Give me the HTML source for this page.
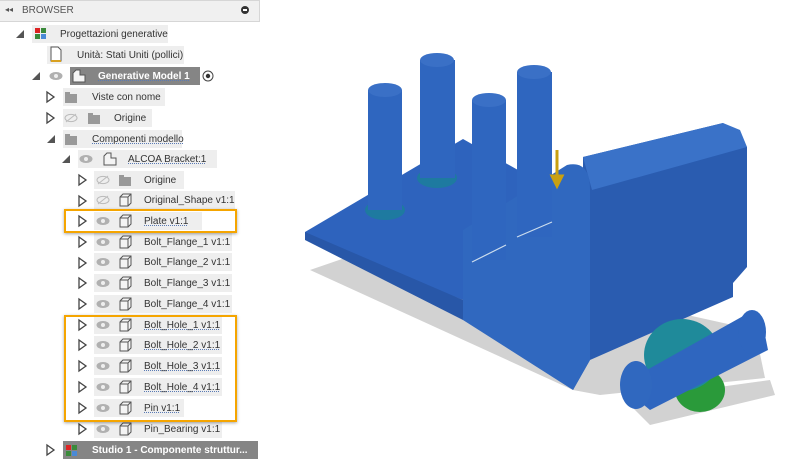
<!DOCTYPE html>
<html><head><meta charset="utf-8"><style>
body{margin:0;width:809px;height:465px;background:#fff;position:relative;overflow:hidden;font-family:"Liberation Sans",sans-serif;font-size:10px;color:#333}
.a{position:absolute}
.hdr{left:0;top:0;width:259px;height:20px;background:#f0f0f0;border:1px solid #d6d6d6;border-left:none}
.box{position:absolute;height:18px;background:#eeeeee}
.dark{background:#858585;color:#fff;font-weight:bold}
.t{position:absolute;line-height:18px;white-space:nowrap;margin-top:1px}
.u{text-decoration:underline dotted #5a7bb5}
.ob{position:absolute;border:2px solid #f5a500;box-shadow:0 1px 3px rgba(0,0,0,.35)}
</style></head><body>
<div class="a hdr"></div>
<div class="a" style="left:5px;top:5px;font-size:8px;color:#555">◂◂</div>
<div class="a" style="left:22px;top:5px;font-size:10px;color:#555">BROWSER</div>
<div class="a" style="left:241px;top:6px;width:8px;height:8px;border-radius:50%;background:#333"></div>
<div class="a" style="left:243px;top:9px;width:4px;height:2px;background:#fff"></div>

<svg class="a" style="left:0;top:0" width="270" height="465">
<defs>
<g id="tri"><path d="M1 1 L8 6 L1 11 Z" fill="#fff" stroke="#444" stroke-width="1.3"/></g>
<g id="open"><path d="M1 10 L9 10 L9 2 Z" fill="#555"/></g>
<g id="eye"><ellipse cx="6" cy="5" rx="6.5" ry="4" fill="#b0b0b0"/><circle cx="6" cy="5" r="2" fill="#eee"/></g>
<g id="eyex"><ellipse cx="6" cy="5" rx="6" ry="3.6" fill="none" stroke="#bbb"/><line x1="1" y1="9" x2="11" y2="1" stroke="#bbb"/></g>
<g id="fold"><rect x="0" y="2" width="12" height="9" fill="#999"/><rect x="0" y="0" width="5" height="3" fill="#999"/></g>
<g id="cube"><path d="M1 4 L4 1 L12 1 L12 10 L9 13 L1 13 Z" fill="#f4f4f4" stroke="#555"/><path d="M1 4 L9 4 L12 1 M9 4 L9 13" fill="none" stroke="#555"/></g>
<g id="comp"><path d="M1 4 L4 1 L8 1 L8 6 L13 6 L13 13 L1 13 Z" fill="#f4f4f4" stroke="#555"/></g>
<g id="gen"><rect x="0" y="0" width="5" height="5" fill="#d22"/><rect x="6" y="0" width="5" height="5" fill="#3a8a3a"/><rect x="0" y="6" width="5" height="5" fill="#3a8a3a"/><rect x="6" y="6" width="5" height="5" fill="#4a8ad6"/></g>
</defs>
<use href="#open" x="15" y="28"/>
<use href="#open" x="31" y="70"/>
<use href="#tri" x="46" y="91"/>
<use href="#tri" x="46" y="112"/>
<use href="#open" x="46" y="133"/>
<use href="#open" x="61" y="153"/>
<use href="#tri" x="78" y="174"/><use href="#tri" x="78" y="195"/><use href="#tri" x="78" y="215"/><use href="#tri" x="78" y="236"/><use href="#tri" x="78" y="257"/><use href="#tri" x="78" y="277"/><use href="#tri" x="78" y="298"/><use href="#tri" x="78" y="319"/><use href="#tri" x="78" y="339"/><use href="#tri" x="78" y="360"/><use href="#tri" x="78" y="381"/><use href="#tri" x="78" y="402"/><use href="#tri" x="78" y="423"/>
<use href="#tri" x="46" y="444"/>
</svg>

<div class="box" style="left:32px;top:25px;width:136px"></div>
<div class="box" style="left:47px;top:46px;width:137px"></div>
<div class="box dark" style="left:70px;top:67px;width:130px"></div>
<div class="box" style="left:63px;top:88px;width:102px"></div>
<div class="box" style="left:63px;top:109px;width:89px"></div>
<div class="box" style="left:63px;top:130px;width:119px"></div>
<div class="box" style="left:78px;top:150px;width:139px"></div>
<div class="box" style="left:94px;top:171px;width:90px"></div>
<div class="box" style="left:94px;top:191px;width:141px"></div>
<div class="box" style="left:94px;top:212px;width:108px"></div>
<div class="box" style="left:94px;top:233px;width:138px"></div>
<div class="box" style="left:94px;top:253px;width:138px"></div>
<div class="box" style="left:94px;top:274px;width:138px"></div>
<div class="box" style="left:94px;top:295px;width:138px"></div>
<div class="box" style="left:94px;top:316px;width:128px"></div>
<div class="box" style="left:94px;top:336px;width:128px"></div>
<div class="box" style="left:94px;top:357px;width:128px"></div>
<div class="box" style="left:94px;top:378px;width:128px"></div>
<div class="box" style="left:94px;top:399px;width:90px"></div>
<div class="box" style="left:94px;top:420px;width:128px"></div>
<div class="box dark" style="left:63px;top:441px;width:195px"></div>

<svg class="a" style="left:0;top:0" width="270" height="465">
<use href="#gen" x="35" y="28"/>
<path d="M51 47 L58 47 L61 50 L61 61 L51 61 Z" fill="#fff" stroke="#555"/><rect x="51" y="60" width="10" height="2" fill="#d8a020"/>
<use href="#eye" x="50" y="71"/><use href="#comp" x="72" y="69"/>
<circle cx="208" cy="76" r="5" fill="#fff" stroke="#444"/><circle cx="208" cy="76" r="2.2" fill="#333"/>
<use href="#fold" x="65" y="92"/>
<use href="#eyex" x="65" y="113"/><use href="#fold" x="88" y="113"/>
<use href="#fold" x="65" y="134"/>
<use href="#eye" x="80" y="154"/><use href="#comp" x="103" y="152"/>
<use href="#eyex" x="97" y="175"/><use href="#fold" x="119" y="175"/>
<use href="#eyex" x="97" y="195"/><use href="#cube" x="119" y="193"/>
<g id="r"><use href="#eye" x="97" y="216"/><use href="#cube" x="119" y="214"/></g>
<use href="#r" y="21"/><use href="#r" y="41"/><use href="#r" y="62"/><use href="#r" y="83"/><use href="#r" y="104"/><use href="#r" y="124"/><use href="#r" y="145"/><use href="#r" y="166"/><use href="#r" y="187"/><use href="#r" y="208"/>
<use href="#gen" x="66" y="445"/>
</svg>

<div class="t" style="left:60px;top:25px">Progettazioni generative</div>
<div class="t" style="left:77px;top:46px">Unità: Stati Uniti (pollici)</div>
<div class="t u" style="left:98px;top:67px;color:#fff;font-weight:bold">Generative Model 1</div>
<div class="t" style="left:92px;top:88px">Viste con nome</div>
<div class="t" style="left:114px;top:109px">Origine</div>
<div class="t u" style="left:92px;top:130px">Componenti modello</div>
<div class="t u" style="left:128px;top:150px">ALCOA Bracket:1</div>
<div class="t" style="left:144px;top:171px">Origine</div>
<div class="t" style="left:144px;top:191px">Original_Shape v1:1</div>
<div class="t u" style="left:144px;top:212px">Plate v1:1</div>
<div class="t" style="left:144px;top:233px">Bolt_Flange_1 v1:1</div>
<div class="t" style="left:144px;top:253px">Bolt_Flange_2 v1:1</div>
<div class="t" style="left:144px;top:274px">Bolt_Flange_3 v1:1</div>
<div class="t" style="left:144px;top:295px">Bolt_Flange_4 v1:1</div>
<div class="t u" style="left:144px;top:316px">Bolt_Hole_1 v1:1</div>
<div class="t u" style="left:144px;top:336px">Bolt_Hole_2 v1:1</div>
<div class="t u" style="left:144px;top:357px">Bolt_Hole_3 v1:1</div>
<div class="t u" style="left:144px;top:378px">Bolt_Hole_4 v1:1</div>
<div class="t u" style="left:144px;top:399px">Pin v1:1</div>
<div class="t" style="left:144px;top:420px">Pin_Bearing v1:1</div>
<div class="t" style="left:92px;top:441px;color:#fff;font-weight:bold">Studio 1 - Componente struttur...</div>

<div class="ob" style="left:64px;top:209px;width:169px;height:20px"></div>
<div class="ob" style="left:64px;top:315px;width:169px;height:103px"></div>

<svg class="a" style="left:0;top:0" width="809" height="465">
<polygon points="310,270 573,390 600,395 765,378 755,330 620,300 470,215" fill="#d2d2d2"/>
<polygon points="625,400 770,380 775,395 650,425" fill="#d2d2d2"/>
<polygon points="305,232 463,139 580,205 463,300 305,238" fill="#2e63bd"/>
<polygon points="305,232 463,300 463,320 305,240" fill="#2857a8"/>
<polygon points="583,157 723,123 747,147 747,267 733,283 733,297 590,360 573,390 583,200" fill="#2a5cb0"/>
<polygon points="583,157 723,123 740,130 747,147 592,190" fill="#3a72c8"/>
<path d="M463,230 L567,165 Q590,160 590,190 L590,360 L573,390 L463,320 Z" fill="#3068bf"/>
<g fill="#2f66bf">
<ellipse cx="385" cy="210" rx="20" ry="10" fill="#1e7aa0"/>
<rect x="368" y="90" width="34" height="120"/><ellipse cx="385" cy="90" rx="17" ry="7" fill="#3a70c6"/>
<ellipse cx="437" cy="178" rx="20" ry="10" fill="#1e7aa0"/>
<rect x="420" y="60" width="35" height="118"/><ellipse cx="437" cy="60" rx="17" ry="7" fill="#3a70c6"/>
<rect x="472" y="100" width="34" height="160"/><ellipse cx="489" cy="100" rx="17" ry="7" fill="#3a70c6"/>
<rect x="517" y="72" width="35" height="165"/><ellipse cx="534" cy="72" rx="17" ry="7" fill="#3a70c6"/>
</g>
<path d="M472,262 L506,245 M517,237 L552,222" stroke="#cde" stroke-width="1.2" fill="none"/>
<path d="M557,150 L557,178 M552,176 L557,186 L562,176 Z" stroke="#c9a010" stroke-width="3" fill="#c9a010"/>
<ellipse cx="700" cy="390" rx="25" ry="22" fill="#2a9a3a"/>
<ellipse cx="682" cy="355" rx="38" ry="36" fill="#1f8a9a"/>
<polygon points="620,385 745,315 765,335 768,350 650,410" fill="#2f66bf"/>
<ellipse cx="636" cy="385" rx="16" ry="24" fill="#3068bf"/>
<ellipse cx="752" cy="332" rx="14" ry="22" fill="#2f66bf"/>
</svg>
</body></html>
